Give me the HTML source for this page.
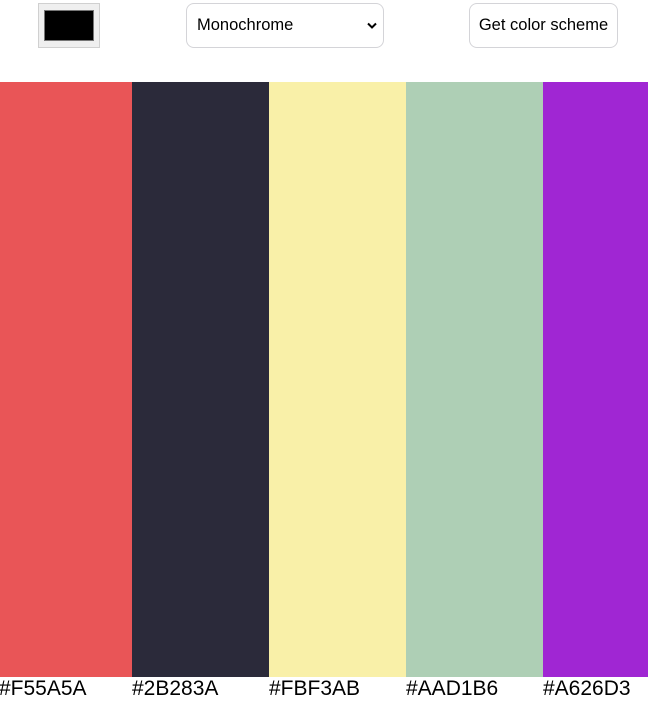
<!DOCTYPE html>
<html><head><meta charset="utf-8"><style>
*{box-sizing:border-box;margin:0;padding:0}
html,body{width:648px;height:697px;overflow:hidden;background:#fff;font-family:"Liberation Sans",Arial,sans-serif}
.swatch{position:absolute;left:38px;top:3px;width:62px;height:45px;background:#efefef;border:1px solid #d0d0d0}
.swatch div{position:absolute;left:5px;top:6px;width:50px;height:31px;background:#000;border:1px solid #767676}
.sel{position:absolute;left:186px;top:3px;width:198px;height:45px;border:1px solid #d4d4d8;border-radius:8px;background:#fff;font-size:16.5px;line-height:43px;padding-left:10px;color:#000}
.sel svg{position:absolute;right:6px;top:18px}
.btn{position:absolute;left:469px;top:3px;width:149px;height:45px;border:1px solid #d4d4d8;border-radius:8px;background:#fff;font-size:16.5px;line-height:43px;text-align:center;color:#000}
.col{position:absolute;top:82px;height:595px}
.lab{position:absolute;top:677px;font-size:21px;line-height:24px;color:#000;font-family:"Liberation Sans",Arial,sans-serif}
</style></head><body>
<div class="swatch"><div></div></div>
<div class="sel">Monochrome<svg width="10" height="8" viewBox="0 0 10 8"><path d="M1 1.5 L5 5.5 L9 1.5" stroke="#000" stroke-width="2" fill="none"/></svg></div>
<div class="btn">Get color scheme</div>
<div class="col" style="left:0;width:132px;background:#E95557"></div>
<div class="col" style="left:132px;width:137px;background:#2B2A3A"></div>
<div class="col" style="left:269px;width:137px;background:#F9F0A8"></div>
<div class="col" style="left:406px;width:137px;background:#AECFB5"></div>
<div class="col" style="left:543px;width:105px;background:#A026D3"></div>
<div class="lab" style="left:-1px">#F55A5A</div>
<div class="lab" style="left:132px">#2B283A</div>
<div class="lab" style="left:269px">#FBF3AB</div>
<div class="lab" style="left:406px">#AAD1B6</div>
<div class="lab" style="left:543px">#A626D3</div>
</body></html>
